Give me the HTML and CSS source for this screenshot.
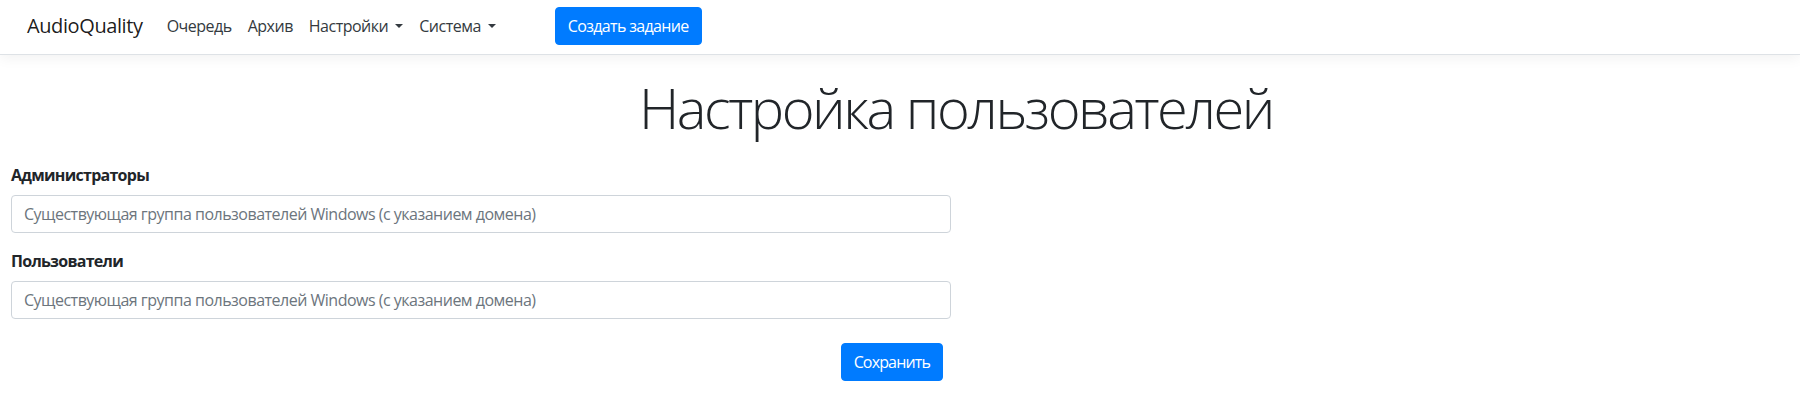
FILE: index.html
```html
<!DOCTYPE html>
<html lang="ru">
<head>
<meta charset="utf-8">
<title>Настройка пользователей - AudioQuality</title>
<link rel="stylesheet" href="styles.css">
</head>
<body>
<nav class="navbar">
  <a class="brand" href="#">AudioQuality</a>
  <ul class="nav">
    <li><a class="nav-link" href="#">Очередь</a></li>
    <li><a class="nav-link" href="#">Архив</a></li>
    <li><a class="nav-link dropdown-toggle" href="#">Настройки</a></li>
    <li><a class="nav-link dropdown-toggle" href="#">Система</a></li>
  </ul>
  <button class="btn btn-primary nav-btn" type="button">Создать задание</button>
</nav>
<main class="main">
  <h1 class="display-title">Настройка пользователей</h1>
  <form class="settings-form">
    <div class="form-group">
      <label class="form-label" for="admins">Администраторы</label>
      <input class="form-control" id="admins" type="text" placeholder="Существующая группа пользователей Windows (с указанием домена)">
    </div>
    <div class="form-group">
      <label class="form-label" for="users">Пользователи</label>
      <input class="form-control" id="users" type="text" placeholder="Существующая группа пользователей Windows (с указанием домена)">
    </div>
    <div class="form-actions">
      <button class="btn btn-primary btn-save" type="submit">Сохранить</button>
    </div>
  </form>
</main>
</body>
</html>
```
FILE: styles.css
```css
* { box-sizing: border-box; }

html, body {
  margin: 0;
  padding: 0;
  background: #fff;
}

body {
  font-family: "Open Sans", "Noto Sans", "Liberation Sans", sans-serif;
  font-size: 16px;
  line-height: 24px;
  color: #212529;
}

.navbar {
  display: flex;
  align-items: center;
  height: 55px;
  padding: 0 16px 2px 27px;
  background: #fff;
  border-bottom: 1px solid #dee2e6;
  box-shadow: 0 4px 12px rgba(0, 0, 0, 0.05);
}

.brand {
  font-size: 20px;
  line-height: 30px;
  color: rgba(0, 0, 0, 0.9);
  text-decoration: none;
  margin-right: 16px;
  letter-spacing: -0.4px;
}

.nav {
  display: flex;
  list-style: none;
  margin: 0;
  padding: 0;
}

.nav-link {
  display: block;
  padding: 8px;
  color: #343a40;
  text-decoration: none;
  letter-spacing: -0.5px;
}

.dropdown-toggle::after {
  content: "";
  display: inline-block;
  margin-left: 7px;
  vertical-align: 4px;
  border-top: 4.8px solid;
  border-right: 4.8px solid transparent;
  border-left: 4.8px solid transparent;
}

.btn {
  display: inline-block;
  font-family: inherit;
  font-size: 16px;
  line-height: 24px;
  padding: 6px 12px;
  border: 1px solid transparent;
  border-radius: 4px;
  cursor: pointer;
  letter-spacing: -0.5px;
}

.btn-primary {
  color: #fff;
  background: #007bff;
  border-color: #007bff;
}

.nav-btn {
  margin-left: 51px;
  letter-spacing: -0.65px;
}

.btn-save {
  letter-spacing: -0.85px;
}

.main {
  padding: 0 0 0 11px;
}

.display-title {
  margin: 19px 0 22px;
  padding-left: 101px;
  text-align: center;
  font-size: 56px;
  font-weight: 300;
  line-height: 1.2;
  letter-spacing: -2.45px;
  color: #212529;
}

.settings-form {
  width: 940px;
}

.form-group {
  margin-bottom: 16px;
}

.form-label {
  display: block;
  margin-bottom: 8px;
  font-weight: 700;
  letter-spacing: -0.72px;
}

.form-control {
  display: block;
  width: 100%;
  height: 38px;
  padding: 6px 12px;
  font-family: inherit;
  font-size: 16px;
  line-height: 24px;
  color: #495057;
  background: #fff;
  border: 1px solid #ced4da;
  border-radius: 4px;
  letter-spacing: -0.5px;
}

.form-control::placeholder {
  color: #6c757d;
  opacity: 1;
}

.form-actions {
  display: flex;
  justify-content: flex-end;
  padding-right: 8px;
  margin-top: 24px;
}
```
